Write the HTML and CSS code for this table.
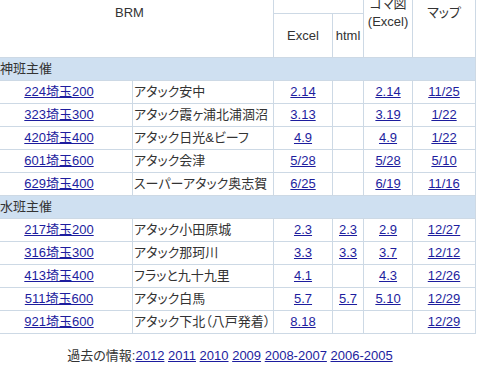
FILE: index.html
```html
<!DOCTYPE html>
<html lang="ja">
<head>
<meta charset="utf-8">
<title>BRM</title>
<link rel="stylesheet" href="styles.css">
</head>
<body>
<div class="page">
  <table class="brm">
    <colgroup>
      <col class="c-no"><col class="c-name"><col class="c-xl"><col class="c-html"><col class="c-koma"><col class="c-map">
    </colgroup>
    <thead>
      <tr class="h1">
        <th colspan="2" rowspan="2">BRM</th>
        <th colspan="2" class="cue">キューシート</th>
        <th rowspan="2">コマ図<br>(Excel)</th>
        <th rowspan="2">マップ</th>
      </tr>
      <tr class="h2">
        <th>Excel</th>
        <th>html</th>
      </tr>
    </thead>
    <tbody>
      <tr class="sec"><td colspan="6">風神班主催</td></tr>
      <tr><td class="no"><a href="#">224埼玉200</a></td><td class="name">アタック安中</td><td><a href="#">2.14</a></td><td></td><td><a href="#">2.14</a></td><td><a href="#">11/25</a></td></tr>
      <tr><td class="no"><a href="#">323埼玉300</a></td><td class="name">アタック霞ヶ浦北浦涸沼</td><td><a href="#">3.13</a></td><td></td><td><a href="#">3.19</a></td><td><a href="#">1/22</a></td></tr>
      <tr><td class="no"><a href="#">420埼玉400</a></td><td class="name">アタック日光&amp;ビーフ</td><td><a href="#">4.9</a></td><td></td><td><a href="#">4.9</a></td><td><a href="#">1/22</a></td></tr>
      <tr><td class="no"><a href="#">601埼玉600</a></td><td class="name">アタック会津</td><td><a href="#">5/28</a></td><td></td><td><a href="#">5/28</a></td><td><a href="#">5/10</a></td></tr>
      <tr><td class="no"><a href="#">629埼玉400</a></td><td class="name">スーパーアタック奥志賀</td><td><a href="#">6/25</a></td><td></td><td><a href="#">6/19</a></td><td><a href="#">11/16</a></td></tr>
      <tr class="sec"><td colspan="6">清水班主催</td></tr>
      <tr><td class="no"><a href="#">217埼玉200</a></td><td class="name">アタック小田原城</td><td><a href="#">2.3</a></td><td><a href="#">2.3</a></td><td><a href="#">2.9</a></td><td><a href="#">12/27</a></td></tr>
      <tr><td class="no"><a href="#">316埼玉300</a></td><td class="name">アタック那珂川</td><td><a href="#">3.3</a></td><td><a href="#">3.3</a></td><td><a href="#">3.7</a></td><td><a href="#">12/12</a></td></tr>
      <tr><td class="no"><a href="#">413埼玉400</a></td><td class="name">フラッと九十九里</td><td><a href="#">4.1</a></td><td></td><td><a href="#">4.3</a></td><td><a href="#">12/26</a></td></tr>
      <tr><td class="no"><a href="#">511埼玉600</a></td><td class="name">アタック白馬</td><td><a href="#">5.7</a></td><td><a href="#">5.7</a></td><td><a href="#">5.10</a></td><td><a href="#">12/29</a></td></tr>
      <tr><td class="no"><a href="#">921埼玉600</a></td><td class="name">アタック下北（八戸発着）</td><td><a href="#">8.18</a></td><td></td><td></td><td><a href="#">12/29</a></td></tr>
    </tbody>
  </table>
  <p class="past">過去の情報:<a href="#">2012</a> <a href="#">2011</a> <a href="#">2010</a> <a href="#">2009</a> <a href="#">2008-2007</a> <a href="#">2006-2005</a></p>
</div>
</body>
</html>
```
FILE: styles.css
```css
html, body {
  margin: 0;
  padding: 0;
  background: #ffffff;
}
body {
  font-family: "Liberation Sans", "Noto Sans CJK JP", sans-serif;
  font-size: 13px;
  color: #333333;
  font-feature-settings: "palt";
}
.page {
  margin: -32px 0 0 -15px;
  width: 490px;
}
.brm {
  border-collapse: collapse;
  table-layout: fixed;
  width: 490px;
}
.c-no { width: 147px; }
.c-name { width: 141px; }
.c-xl { width: 59px; }
.c-html { width: 31px; }
.c-koma { width: 49px; }
.c-map { width: 63px; }
.brm th, .brm td {
  border: 1px solid #cdd9e5;
  padding: 0;
  text-align: center;
  vertical-align: middle;
  line-height: 18px;
  white-space: nowrap;
  overflow: hidden;
}
.brm th {
  font-weight: normal;
  color: #333333;
}
.brm th.cue {
  vertical-align: top;
  padding-top: 2px;
}
.h1 { height: 45px; }
.h2 { height: 44px; }
.brm tbody tr { height: 23px; }
.brm td.name {
  text-align: left;
  padding-left: 1px;
}
.brm tr.sec td {
  background: #cfe0f1;
  text-align: left;
  padding-left: 1px;
  font-feature-settings: normal;
}
a {
  color: #1d1d9e;
  text-decoration: underline;
}
.past {
  margin: 14px 0 0 0;
  text-align: center;
  line-height: 16px;
}
```
